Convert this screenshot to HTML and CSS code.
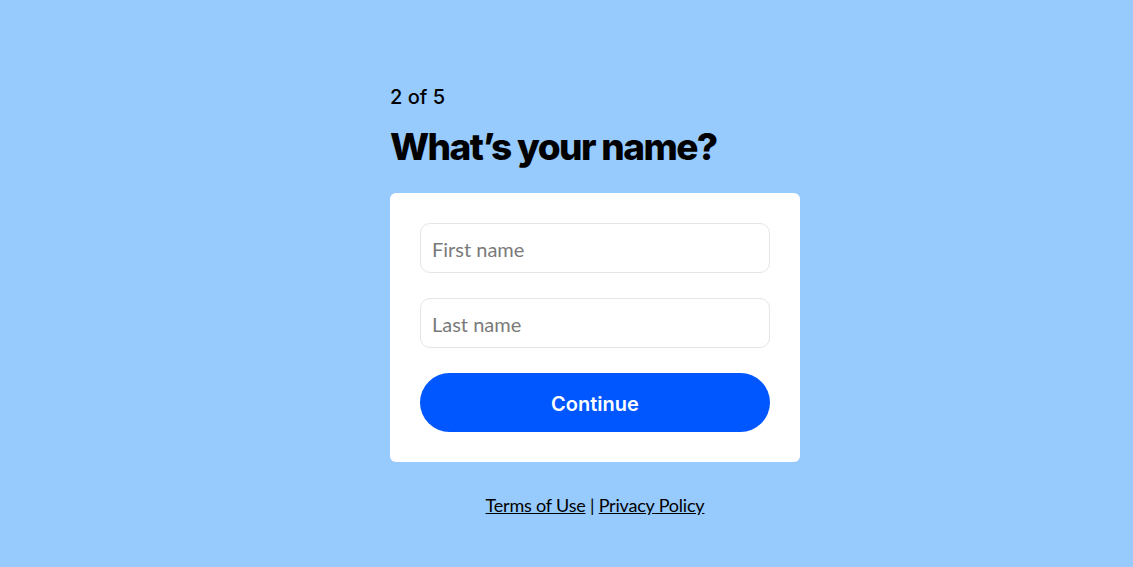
FILE: index.html
```html
<!DOCTYPE html>
<html lang="en">
<head>
<meta charset="utf-8">
<title>What's your name?</title>
<link rel="stylesheet" href="styles.css">
</head>
<body>
<main class="page">
  <div class="column">
    <p class="step">2 of 5</p>
    <h1 class="title">What’s your name?</h1>
    <form class="card">
      <input class="field" type="text" placeholder="First name">
      <input class="field" type="text" placeholder="Last name">
      <button class="continue" type="button">Continue</button>
    </form>
    <p class="legal"><a href="#">Terms of Use</a> | <a href="#">Privacy Policy</a></p>
  </div>
</main>
</body>
</html>
```
FILE: styles.css
```css
* { box-sizing: border-box; }
html, body { margin: 0; height: 100%; }
body {
  background: #97cbfe;
  font-family: Inter, "Noto Sans", sans-serif;
  color: #000;
}
.page {
  padding: 84px 0 0 390px;
}
.column {
  width: 410px;
  display: flex;
  flex-direction: column;
}
.step {
  margin: 0;
  font-size: 20px;
  line-height: 26px;
  font-weight: 500;
}
.title {
  margin: 14px 0 0;
  font-size: 37px;
  line-height: 46px;
  font-weight: 800;
  letter-spacing: -1.6px;
}
.card {
  margin-top: 23px;
  background: #fff;
  border-radius: 6px;
  padding: 30px;
  display: flex;
  flex-direction: column;
}
.field {
  height: 50px;
  border: 1px solid #e5e5e5;
  border-radius: 10px;
  padding: 2px 11px 0;
  font-family: Lato, sans-serif;
  font-size: 20px;
  color: #222;
  background: #fff;
  margin-bottom: 25px;
  outline: none;
}
.field::placeholder { color: #7a7a7a; }
.continue {
  height: 59px;
  border: 0;
  border-radius: 30px;
  background: #0057ff;
  color: #fff;
  font-family: Inter, sans-serif;
  font-size: 20px;
  font-weight: 600;
  padding-top: 4px;
  cursor: pointer;
}
.legal {
  margin: 32px 0 0;
  text-align: center;
  font-family: Lato, sans-serif;
  font-size: 18px;
  line-height: 22px;
  letter-spacing: -0.2px;
}
.legal a { color: #000; text-decoration: underline; }
```
